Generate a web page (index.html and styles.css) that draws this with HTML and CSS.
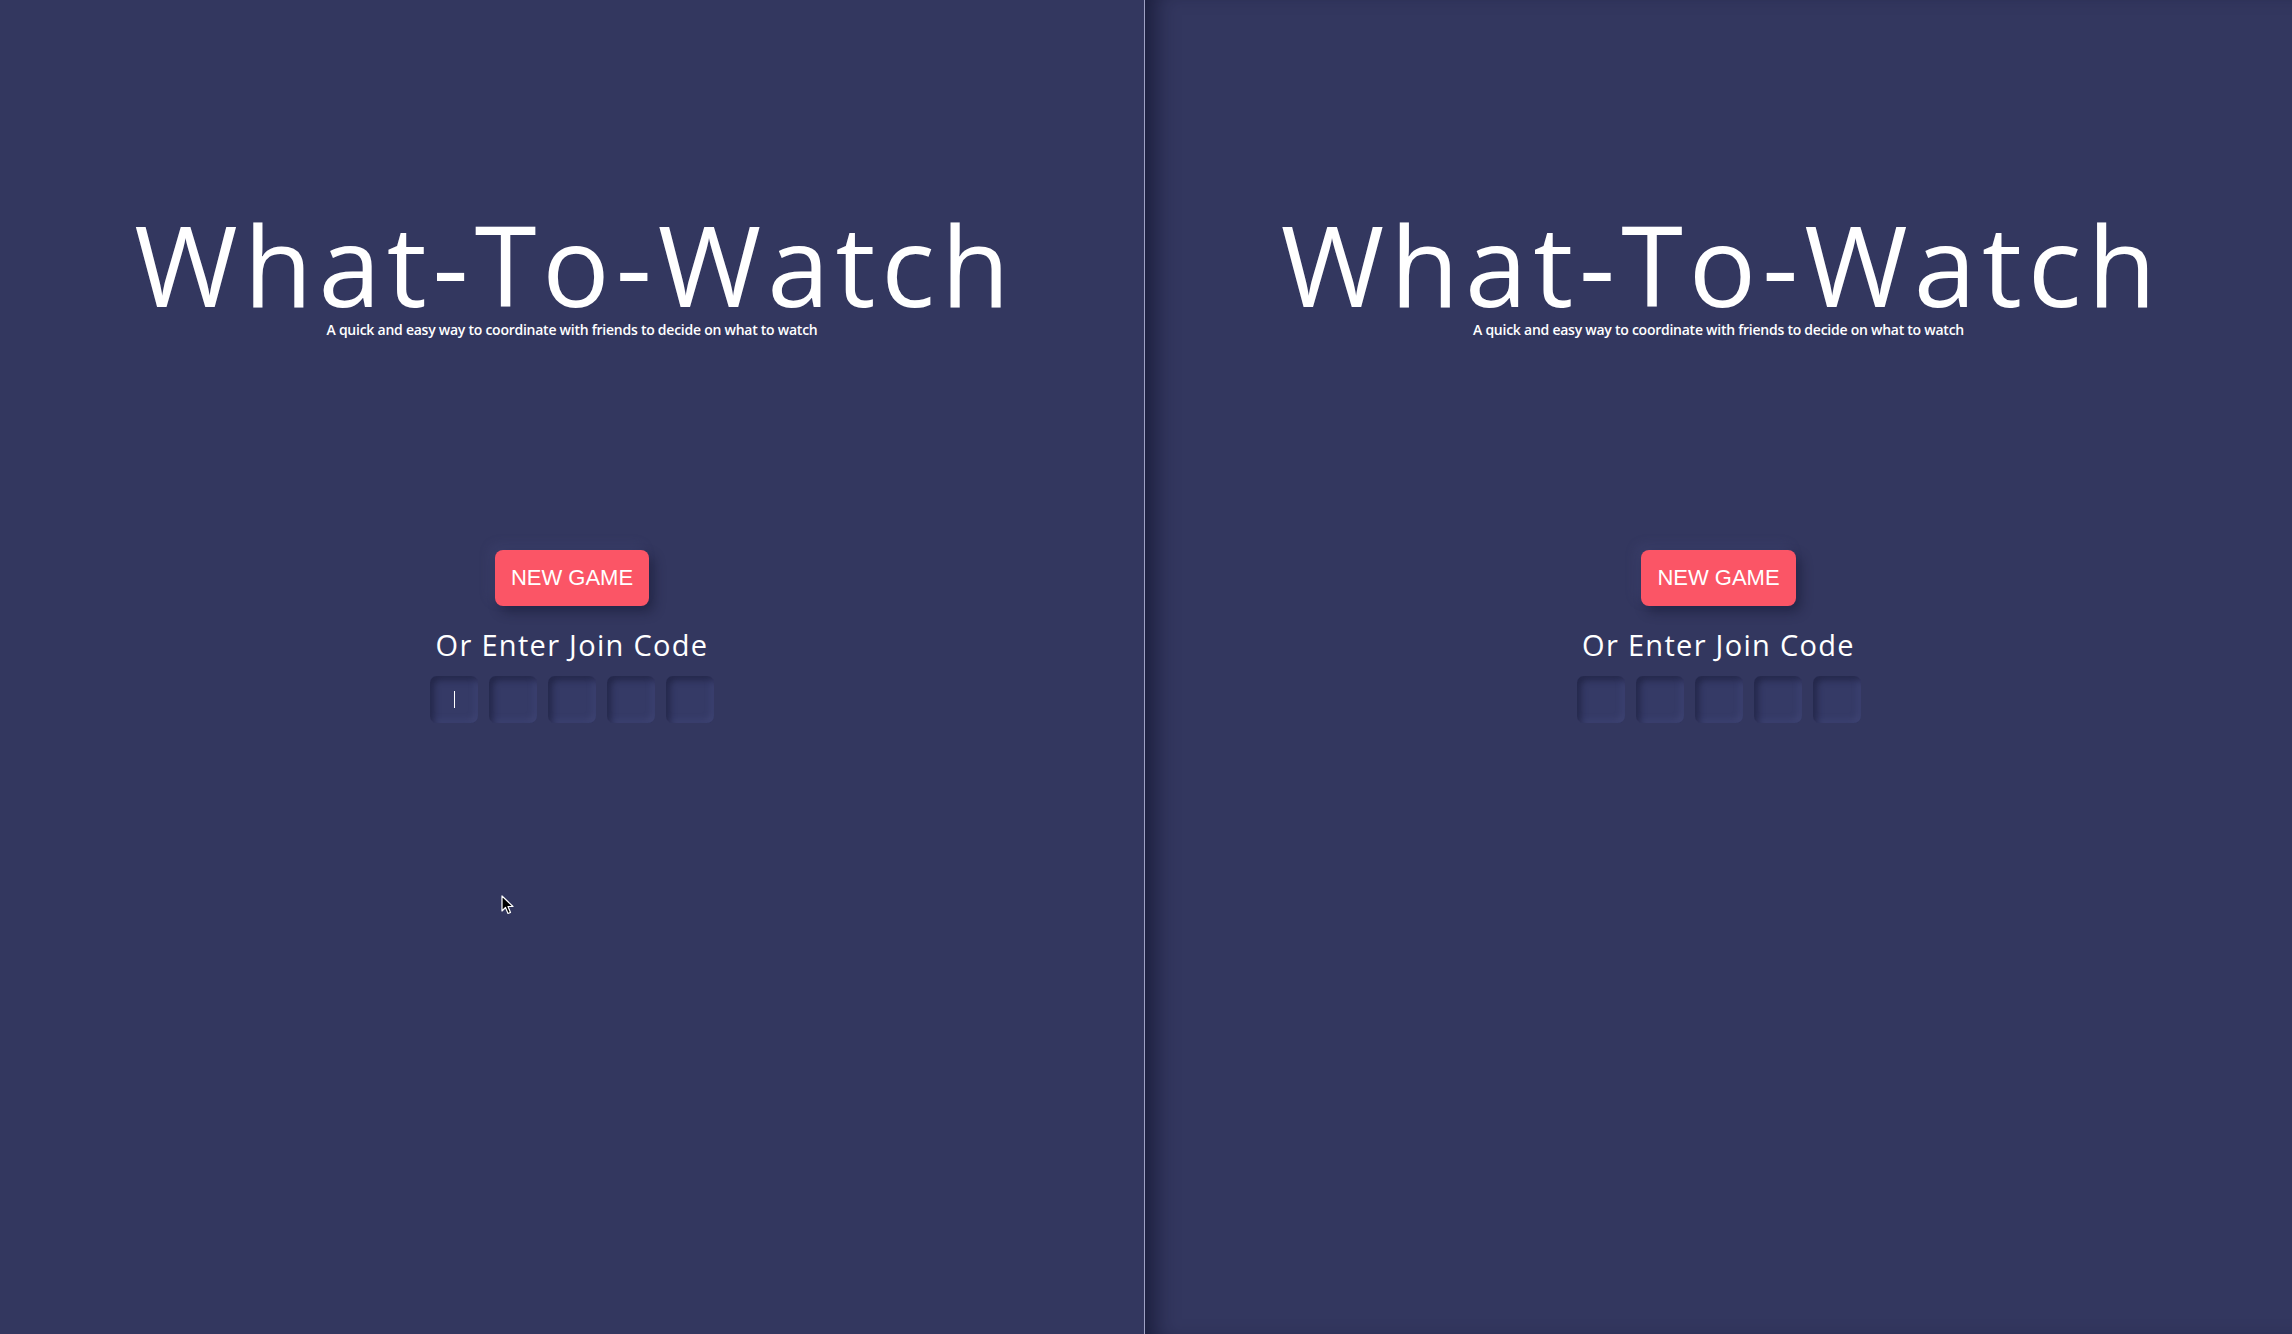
FILE: index.html
```html
<!DOCTYPE html>
<html lang="en">
<head>
<meta charset="utf-8">
<title>What-To-Watch</title>
<link rel="stylesheet" href="styles.css">
</head>
<body>
<div class="screen">
  <section class="panel panel-left">
    <h1 class="title">What-To-Watch</h1>
    <p class="subtitle">A quick and easy way to coordinate with friends to decide on what to watch</p>
    <button class="new-game">NEW GAME</button>
    <h2 class="join-label">Or Enter Join Code</h2>
    <div class="code-row">
      <div class="code-box"><span class="caret"></span></div>
      <div class="code-box"></div>
      <div class="code-box"></div>
      <div class="code-box"></div>
      <div class="code-box"></div>
    </div>
    <svg class="pointer" width="14" height="21" viewBox="0 0 14 21">
      <path d="M1 1 L1 16 L4.5 12.5 L7 18.5 L9.5 17.5 L7 11.5 L12 11.5 Z" fill="#000" stroke="#fff" stroke-width="1.2" stroke-linejoin="round"/>
    </svg>
  </section>
  <div class="divider"></div>
  <section class="panel panel-right">
    <h1 class="title">What-To-Watch</h1>
    <p class="subtitle">A quick and easy way to coordinate with friends to decide on what to watch</p>
    <button class="new-game">NEW GAME</button>
    <h2 class="join-label">Or Enter Join Code</h2>
    <div class="code-row">
      <div class="code-box"></div>
      <div class="code-box"></div>
      <div class="code-box"></div>
      <div class="code-box"></div>
      <div class="code-box"></div>
    </div>
  </section>
</div>
</body>
</html>
```
FILE: styles.css
```css
* { box-sizing: border-box; }
html, body {
  margin: 0;
  padding: 0;
  background: #33375f;
}
body {
  font-family: "Open Sans", "Noto Sans", sans-serif;
  color: #fff;
}
.screen {
  display: grid;
  grid-template-columns: 1144px 1px 1fr;
  height: 1334px;
  overflow: hidden;
}
.panel {
  position: relative;
  display: flex;
  flex-direction: column;
  align-items: center;
  background: #33375f;
}
.panel-right {
  box-shadow: inset 22px 0 22px -12px rgba(12, 14, 38, 0.6);
}
.divider {
  background: #9fa1c4;
}
.title {
  margin: 208px 0 0;
  font-size: 112px;
  line-height: 112px;
  font-weight: 400;
  letter-spacing: 6px;
  text-indent: 6px;
}
.subtitle {
  margin: 2px 0 0;
  font-size: 14px;
  line-height: 15px;
  font-weight: 600;
  letter-spacing: -0.25px;
}
.new-game {
  margin-top: 213px;
  height: 56px;
  padding: 0 16px;
  border: none;
  border-radius: 8px;
  background: #fb5566;
  color: #fff;
  font-family: "Liberation Sans", Arial, sans-serif;
  font-size: 22px;
  line-height: 26px;
  box-shadow: 5px 6px 12px rgba(18, 20, 45, 0.45), -5px -5px 12px rgba(90, 96, 150, 0.18);
}
.join-label {
  margin: 25px 0 0;
  font-size: 29px;
  line-height: 28px;
  font-weight: 400;
  letter-spacing: 1.3px;
}
.code-row {
  display: flex;
  gap: 11px;
  margin-top: 17px;
}
.code-box {
  position: relative;
  width: 48px;
  height: 47px;
  border-radius: 7px;
  background: #353a66;
  box-shadow: inset 4px 4px 6px rgba(20, 22, 48, 0.5), inset -3px -3px 6px rgba(80, 86, 140, 0.35);
}
.caret {
  position: absolute;
  left: 24px;
  top: 15px;
  width: 1px;
  height: 17px;
  background: #fff;
}
.pointer {
  position: absolute;
  left: 501px;
  top: 895px;
}
```
